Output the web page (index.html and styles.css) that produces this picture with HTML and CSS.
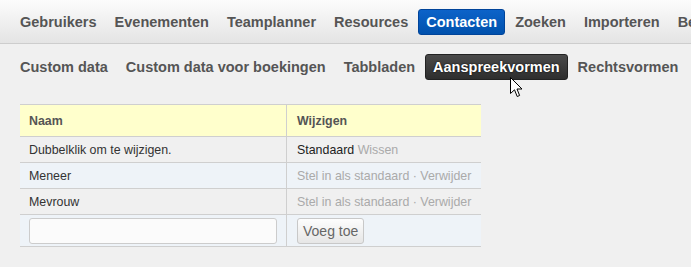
FILE: index.html
```html
<!DOCTYPE html>
<html lang="nl">
<head>
  <meta charset="UTF-8">
  <title>Aanspreekvormen</title>
  <link rel="stylesheet" href="styles.css">
</head>
<body>
<!-- Hoofdmenu -->
<div class="topbar">
  <a href="#">Gebruikers</a>
  <a href="#">Evenementen</a>
  <a href="#">Teamplanner</a>
  <a href="#">Resources</a>
  <a href="#" class="active">Contacten</a>
  <a href="#">Zoeken</a>
  <a href="#">Importeren</a>
  <a href="#">Beheer</a>
</div>

<!-- Submenu -->
<div class="subnav">
  <a href="#">Custom data</a>
  <a href="#">Custom data voor boekingen</a>
  <a href="#">Tabbladen</a>
  <a href="#" class="active">Aanspreekvormen</a>
  <a href="#">Rechtsvormen</a>
</div>

<div class="content">
  <table class="grid">
    <tr class="head">
      <th class="col-name">Naam</th>
      <th>Wijzigen</th>
    </tr>
    <tr>
      <td>Dubbelklik om te wijzigen.</td>
      <td><span class="current">Standaard</span> <a href="#" class="muted">Wissen</a></td>
    </tr>
    <tr class="alt">
      <td>Meneer</td>
      <td><a href="#" class="muted">Stel in als standaard</a> <span class="muted">&middot;</span> <a href="#" class="muted">Verwijder</a></td>
    </tr>
    <tr>
      <td>Mevrouw</td>
      <td><a href="#" class="muted">Stel in als standaard</a> <span class="muted">&middot;</span> <a href="#" class="muted">Verwijder</a></td>
    </tr>
    <tr class="alt add-row">
      <td><input type="text" class="name-input"></td>
      <td><button type="button" class="btn">Voeg toe</button></td>
    </tr>
  </table>
</div>

<!-- muiscursor -->
<svg class="cursor" width="13" height="21" viewBox="0 0 13 21">
  <path d="M0.5 0.5 L0.5 16.5 L4.5 12.8 L7.2 19.5 L9.6 18.5 L7 12 L12 12 Z" fill="#fff" stroke="#000" stroke-width="1" stroke-linejoin="miter"/>
</svg>
</body>
</html>
```
FILE: styles.css
```css
body {
  margin: 0;
  background: #f0f0f0;
  font-family: "Liberation Sans", Arial, sans-serif;
  position: relative;
  overflow: hidden;
}
a {
  text-decoration: none;
}
.topbar {
  display: flex;
  align-items: center;
  gap: 2px;
  height: 43px;
  padding: 0 12px;
  white-space: nowrap;
  background: linear-gradient(#fcfcfc, #e4e4e4);
  border-bottom: 1px solid #cdcdcd;
}
.topbar a, .subnav a {
  display: block;
  padding: 4px 7px;
  font-size: 14.5px;
  font-weight: bold;
  line-height: 16px;
  color: #555;
  border: 1px solid transparent;
  border-radius: 3px;
}
.topbar a.active {
  color: #fff;
  background: linear-gradient(#0d63c9, #0051ad);
  border-color: #00449a;
}
.subnav {
  display: flex;
  gap: 2px;
  padding: 10px 12px 0;
  white-space: nowrap;
}
.subnav a.active {
  color: #fff;
  background: linear-gradient(#4a4a4a, #2e2e2e);
  border-color: #222;
  text-shadow: 0 0 2px #000;
}
.content {
  padding: 24px 20px;
}
.grid {
  width: 461px;
  border-collapse: collapse;
  font-size: 12.4px;
  color: #333;
}
.grid th, .grid td {
  text-align: left;
  padding: 0 9px;
  height: 25px;
  border-top: 1px solid #cfcfcf;
  border-bottom: 1px solid #cfcfcf;
}
.grid th + th, .grid td + td {
  border-left: 1px solid #cfcfcf;
  padding-left: 10px;
}
.grid .head th {
  height: 31px;
  background: #ffffcc;
  color: #555;
  font-weight: bold;
}
.col-name {
  width: 247px;
}
.grid tr.alt td {
  background: #eef3f8;
}
.grid .add-row td {
  height: 31px;
}
.current {
  color: #222;
}
.muted {
  color: #aaa;
}
.name-input {
  display: block;
  box-sizing: border-box;
  width: 248px;
  height: 26px;
  border: 1px solid #ccc;
  border-radius: 3px;
  background: #fbfbfb;
}
.btn {
  display: block;
  height: 26px;
  padding: 0 5px;
  font-family: "Liberation Sans", Arial, sans-serif;
  font-size: 14px;
  color: #666;
  background: linear-gradient(#fdfdfd, #e6e6e6);
  border: 1px solid #c8c8c8;
  border-radius: 3px;
}
.cursor {
  position: absolute;
  left: 510px;
  top: 77px;
}
```
